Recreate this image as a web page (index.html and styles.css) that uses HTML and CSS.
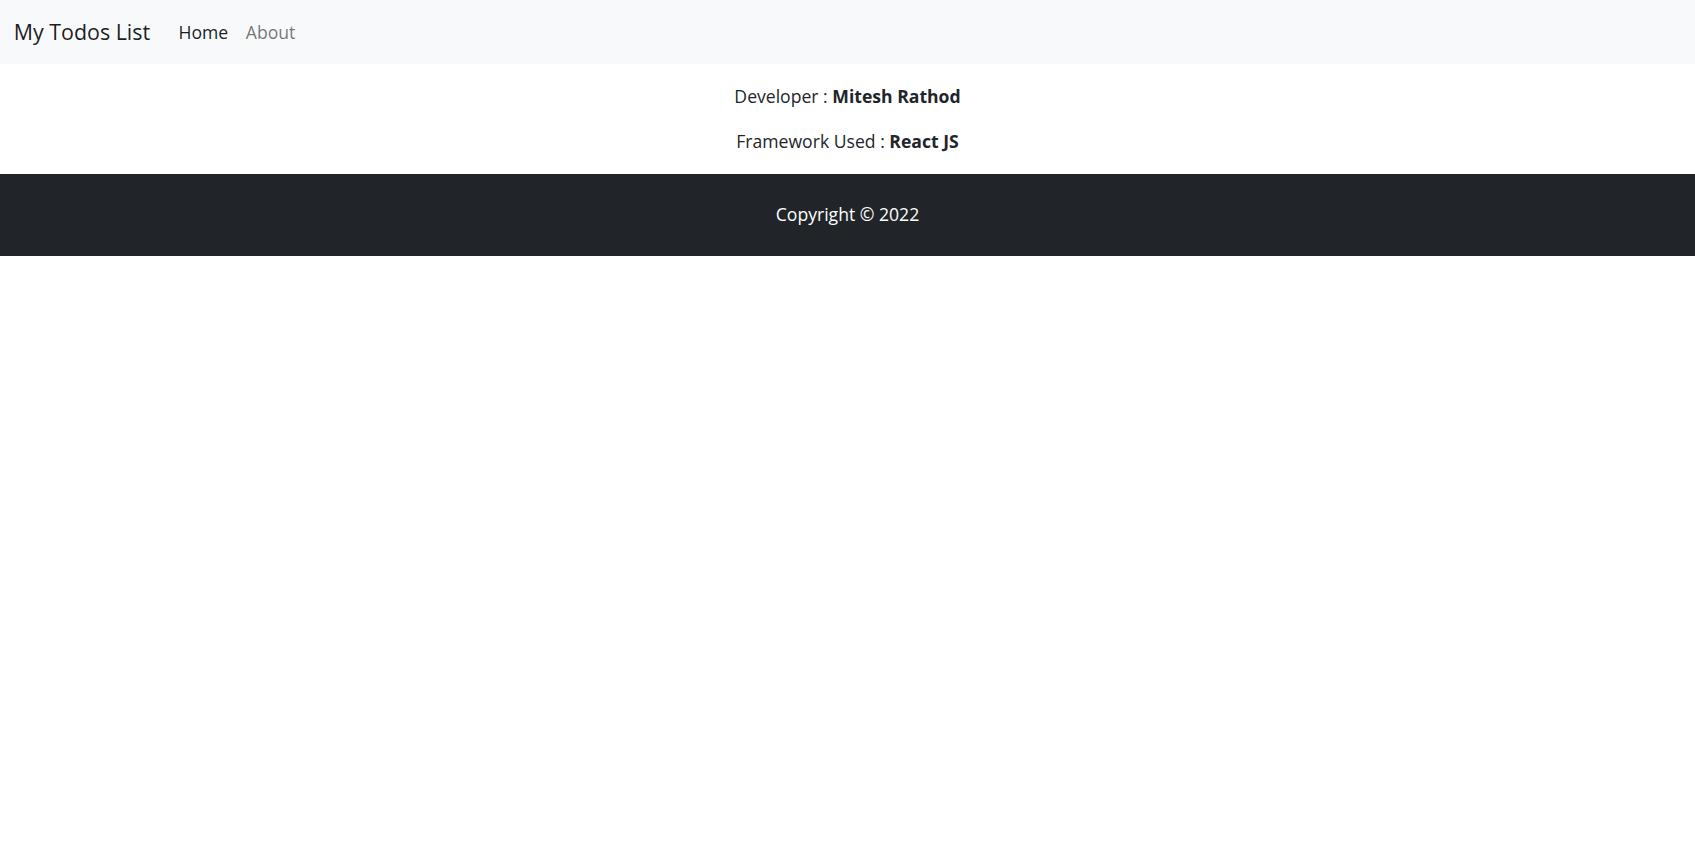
FILE: index.html
```html
<!DOCTYPE html>
<html lang="en">
<head>
<meta charset="utf-8">
<title>My Todos List</title>
<link rel="stylesheet" href="styles.css">
</head>
<body>
<nav class="navbar">
  <div class="nav-inner">
    <a class="brand" href="#">My Todos List</a>
    <ul class="nav-links">
      <li><a class="nav-link active" href="#">Home</a></li>
      <li><a class="nav-link" href="#">About</a></li>
    </ul>
  </div>
</nav>
<main class="about">
  <p>Developer : <b>Mitesh Rathod</b></p>
  <p>Framework Used : <b>React JS</b></p>
</main>
<footer class="footer">
  <p>Copyright &copy; 2022</p>
</footer>
</body>
</html>
```

FILE: styles.css
```css
* { box-sizing: border-box; }
html, body { margin: 0; padding: 0; }
body {
  font-family: "Open Sans", "Noto Sans", sans-serif;
  font-size: 17.6px;
  line-height: 26.4px;
  color: #212529;
  background: #fff;
}
.navbar {
  background: #f8f9fa;
  padding: 8.8px 0;
}
.nav-inner {
  display: flex;
  align-items: center;
  padding: 0 13.8px;
}
.brand {
  font-size: 21.4px;
  line-height: 33px;
  padding: 6.6px 0;
  margin-right: 19.6px;
  color: rgba(0,0,0,.9);
  text-decoration: none;
}
.nav-links {
  display: flex;
  list-style: none;
  margin: 0;
  padding: 0;
}
.nav-link {
  display: block;
  padding: 8.8px;
  color: rgba(0,0,0,.55);
  text-decoration: none;
}
.nav-link.active { color: rgba(0,0,0,.9); }
.about {
  text-align: center;
  padding-top: 19.5px;
}
.about p { margin: 0 0 18.8px; }
.about b { font-weight: 700; }
.footer {
  background: #212529;
  color: #fff;
  text-align: center;
  padding: 27.5px 0 28px;
}
.footer p { margin: 0; }
```
